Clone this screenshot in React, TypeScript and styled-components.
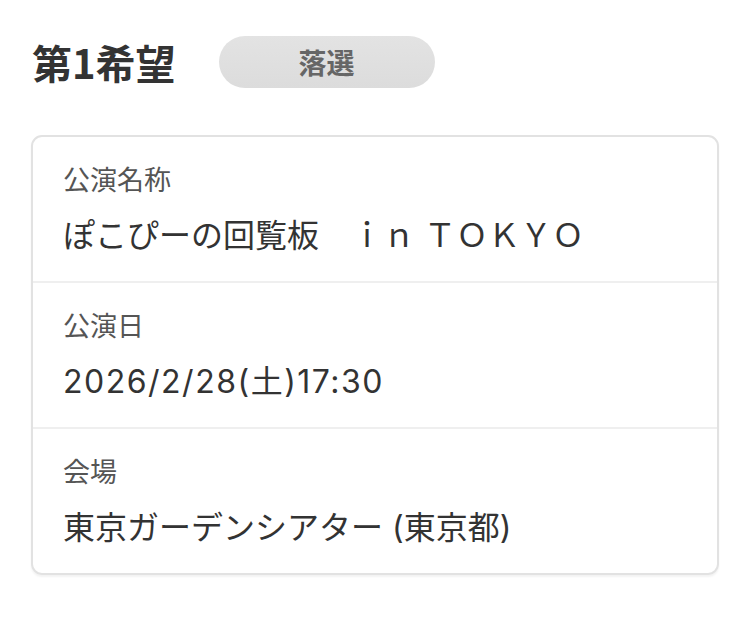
import React from "react";
import styled, { createGlobalStyle } from "styled-components";

const GlobalStyle = createGlobalStyle`
  html, body {
    margin: 0;
    padding: 0;
    background: #ffffff;
  }
  body {
    font-family: "Noto Sans CJK JP", "Noto Sans", sans-serif;
    color: #333333;
  }
`;

const Page = styled.div`
  padding: 36px 26px 40px 31px;
  display: flex;
  flex-direction: column;
  gap: 47px;
`;

const Header = styled.div`
  display: flex;
  align-items: center;
  gap: 43px;
  padding-left: 1px;
`;

const Title = styled.h1`
  margin: 0;
  font-size: 40px;
  font-weight: 700;
  line-height: 52px;
  color: #333333;
  letter-spacing: 0;
`;

const Badge = styled.span`
  display: flex;
  align-items: center;
  justify-content: center;
  width: 216px;
  height: 52px;
  border-radius: 26px;
  background: linear-gradient(#e3e3e3, #dcdcdc);
  color: #666666;
  font-size: 28px;
  font-weight: 700;
`;

const Card = styled.section`
  border: 2px solid #e2e2e2;
  border-radius: 11px;
  box-shadow: 0 2px 2px rgba(0, 0, 0, 0.05);
  display: flex;
  flex-direction: column;
  overflow: hidden;
`;

const Row = styled.div`
  display: flex;
  flex-direction: column;
  gap: 17px;
  padding: 24px 30px 23px 30px;
  & + & {
    border-top: 2px solid #efefef;
  }
`;

const Label = styled.div`
  font-size: 27px;
  line-height: 36px;
  color: #555555;
`;

const Value = styled.div<{ $tracking?: number }>`
  font-family: "Inter", "Noto Sans CJK JP", sans-serif;
  font-size: 32px;
  line-height: 44px;
  color: #333333;
  white-space: pre;
  letter-spacing: ${(p) => p.$tracking ?? 0}px;
`;

const rows = [
  { label: "公演名称", value: "ぽこぴーの回覧板　ｉｎ ＴＯＫＹＯ", tracking: 0 },
  { label: "公演日", value: "2026/2/28(土)17:30", tracking: 1.5 },
  { label: "会場", value: "東京ガーデンシアター (東京都)", tracking: 0 },
];

export default function App() {
  return (
    <>
      <GlobalStyle />
      <Page>
        <Header>
          <Title>第1希望</Title>
          <Badge>落選</Badge>
        </Header>
        <Card>
          {rows.map((r) => (
            <Row key={r.label}>
              <Label>{r.label}</Label>
              <Value $tracking={r.tracking}>{r.value}</Value>
            </Row>
          ))}
        </Card>
      </Page>
    </>
  );
}
